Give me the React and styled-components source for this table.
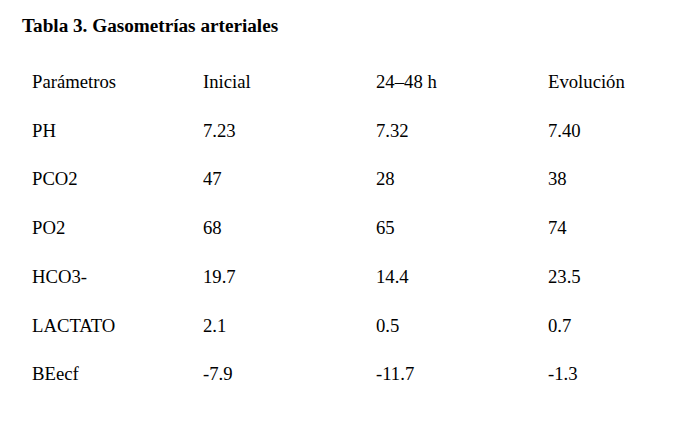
import React from "react";
import styled, { createGlobalStyle } from "styled-components";

const GlobalStyle = createGlobalStyle`
  html, body {
    margin: 0;
    padding: 0;
    background: #ffffff;
  }
  body {
    font-family: "Liberation Serif", "Times New Roman", serif;
    color: #000000;
  }
`;

const Page = styled.div`
  width: 693px;
  height: 443px;
  box-sizing: border-box;
  padding: 14px 0 0 22px;
`;

const Title = styled.h1`
  margin: 0;
  font-size: 19.2px;
  font-weight: 700;
  line-height: 24px;
`;

const Table = styled.div`
  display: grid;
  grid-template-columns: 171px 173px 172px 1fr;
  margin: 33px 0 0 10px;
`;

const Cell = styled.div`
  height: 48.73px;
  font-size: 18.7px;
  line-height: 22px;
  white-space: nowrap;
`;

const rows = [
  ["Parámetros", "Inicial", "24\u201348 h", "Evolución"],
  ["PH", "7.23", "7.32", "7.40"],
  ["PCO2", "47", "28", "38"],
  ["PO2", "68", "65", "74"],
  ["HCO3-", "19.7", "14.4", "23.5"],
  ["LACTATO", "2.1", "0.5", "0.7"],
  ["BEecf", "-7.9", "-11.7", "-1.3"],
];

export default function App() {
  return (
    <>
      <GlobalStyle />
      <Page>
        <Title>Tabla 3. Gasometrías arteriales</Title>
        <Table>
          {rows.map((row, i) =>
            row.map((cell, j) => <Cell key={i + "-" + j}>{cell}</Cell>)
          )}
        </Table>
      </Page>
    </>
  );
}
